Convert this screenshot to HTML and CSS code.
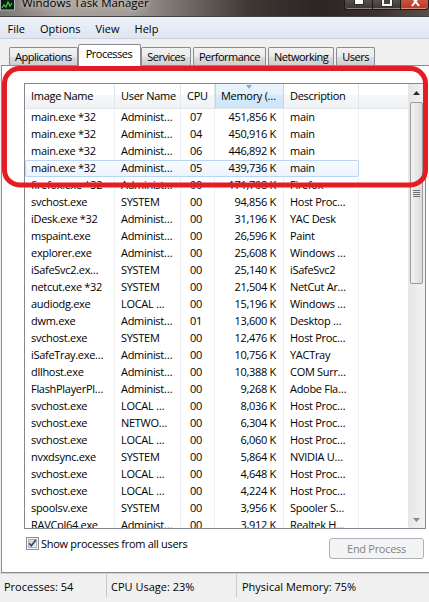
FILE: index.html
```html
<!DOCTYPE html>
<html>
<head>
<meta charset="utf-8">
<title>Windows Task Manager</title>
<link rel="stylesheet" href="styles.css">
</head>
<body>
<div class="window">
  <div class="titlebar">
    <svg class="app-icon" width="15" height="11" viewBox="0 0 15 11">
      <rect x="0.5" y="-2" width="14" height="12" fill="#0d1d10" stroke="#aeb6bc"/>
      <polyline points="2,8 4,5 6,7 8,2 10,6 12,3" fill="none" stroke="#3fd13f" stroke-width="1.2"/>
    </svg>
    <span class="title">Windows Task Manager</span>
    <div class="caption-buttons">
      <span class="cap-btn min"><i></i></span>
      <span class="cap-btn max"><i></i></span>
      <span class="cap-btn close">
        <svg width="12" height="8" viewBox="0 0 12 8"><path d="M3 -3 L10 6 M10 -3 L3 6" stroke="#fff" stroke-width="2"/></svg>
      </span>
    </div>
  </div>

  <div class="menubar">
    <span>File</span><span>Options</span><span>View</span><span>Help</span>
  </div>

  <div class="tabstrip">
    <span class="tab">Applications</span>
    <span class="tab active">Processes</span>
    <span class="tab">Services</span>
    <span class="tab">Performance</span>
    <span class="tab">Networking</span>
    <span class="tab">Users</span>
  </div>

  <div class="panel">
    <div class="listview">
      <div class="table">
        <div class="header">
          <div class="hcell">Image Name</div>
          <div class="hcell">User Name</div>
          <div class="hcell">CPU</div>
          <div class="hcell sorted">Memory (…</div>
          <div class="hcell">Description</div>
          <div class="hcell filler"></div>
        </div>
        <div class="rows">
          <div class="row"><span>main.exe *32</span><span>Administ…</span><span class="num">07</span><span class="mem">451,856 K</span><span>main</span></div>
          <div class="row"><span>main.exe *32</span><span>Administ…</span><span class="num">04</span><span class="mem">450,916 K</span><span>main</span></div>
          <div class="row"><span>main.exe *32</span><span>Administ…</span><span class="num">06</span><span class="mem">446,892 K</span><span>main</span></div>
          <div class="row hot"><span>main.exe *32</span><span>Administ…</span><span class="num">05</span><span class="mem">439,736 K</span><span>main</span></div>
          <div class="row"><span>firefox.exe *32</span><span>Administ…</span><span class="num">00</span><span class="mem">171,708 K</span><span>Firefox</span></div>
          <div class="row"><span>svchost.exe</span><span>SYSTEM</span><span class="num">00</span><span class="mem">94,856 K</span><span>Host Proc…</span></div>
          <div class="row"><span>iDesk.exe *32</span><span>Administ…</span><span class="num">00</span><span class="mem">31,196 K</span><span>YAC Desk</span></div>
          <div class="row"><span>mspaint.exe</span><span>Administ…</span><span class="num">00</span><span class="mem">26,596 K</span><span>Paint</span></div>
          <div class="row"><span>explorer.exe</span><span>Administ…</span><span class="num">00</span><span class="mem">25,608 K</span><span>Windows …</span></div>
          <div class="row"><span>iSafeSvc2.ex…</span><span>SYSTEM</span><span class="num">00</span><span class="mem">25,140 K</span><span>iSafeSvc2</span></div>
          <div class="row"><span>netcut.exe *32</span><span>SYSTEM</span><span class="num">00</span><span class="mem">21,504 K</span><span>NetCut Ar…</span></div>
          <div class="row"><span>audiodg.exe</span><span>LOCAL …</span><span class="num">00</span><span class="mem">15,196 K</span><span>Windows …</span></div>
          <div class="row"><span>dwm.exe</span><span>Administ…</span><span class="num">01</span><span class="mem">13,600 K</span><span>Desktop …</span></div>
          <div class="row"><span>svchost.exe</span><span>SYSTEM</span><span class="num">00</span><span class="mem">12,476 K</span><span>Host Proc…</span></div>
          <div class="row"><span>iSafeTray.exe…</span><span>Administ…</span><span class="num">00</span><span class="mem">10,756 K</span><span>YACTray</span></div>
          <div class="row"><span>dllhost.exe</span><span>Administ…</span><span class="num">00</span><span class="mem">10,388 K</span><span>COM Surr…</span></div>
          <div class="row"><span>FlashPlayerPl…</span><span>Administ…</span><span class="num">00</span><span class="mem">9,268 K</span><span>Adobe Fla…</span></div>
          <div class="row"><span>svchost.exe</span><span>LOCAL …</span><span class="num">00</span><span class="mem">8,036 K</span><span>Host Proc…</span></div>
          <div class="row"><span>svchost.exe</span><span>NETWO…</span><span class="num">00</span><span class="mem">6,304 K</span><span>Host Proc…</span></div>
          <div class="row"><span>svchost.exe</span><span>LOCAL …</span><span class="num">00</span><span class="mem">6,060 K</span><span>Host Proc…</span></div>
          <div class="row"><span>nvxdsync.exe</span><span>SYSTEM</span><span class="num">00</span><span class="mem">5,864 K</span><span>NVIDIA U…</span></div>
          <div class="row"><span>svchost.exe</span><span>LOCAL …</span><span class="num">00</span><span class="mem">4,648 K</span><span>Host Proc…</span></div>
          <div class="row"><span>svchost.exe</span><span>LOCAL …</span><span class="num">00</span><span class="mem">4,224 K</span><span>Host Proc…</span></div>
          <div class="row"><span>spoolsv.exe</span><span>SYSTEM</span><span class="num">00</span><span class="mem">3,956 K</span><span>Spooler S…</span></div>
          <div class="row"><span>RAVCpl64.exe</span><span>Administ…</span><span class="num">00</span><span class="mem">3,912 K</span><span>Realtek H…</span></div>
        </div>
      </div>
      <div class="vscroll">
        <div class="sb-btn">
          <svg width="7" height="4" viewBox="0 0 7 4"><path d="M0 4 L3.5 0 L7 4 Z" fill="#2a2a2a"/></svg>
        </div>
        <div class="sb-track">
          <div class="sb-thumb">
            <svg width="7" height="7" viewBox="0 0 7 7"><path d="M0 0.5 H7 M0 2.5 H7 M0 4.5 H7 M0 6.5 H7" stroke="#6e6e6e" stroke-width="1"/></svg>
          </div>
        </div>
        <div class="sb-btn">
          <svg width="7" height="4" viewBox="0 0 7 4"><path d="M0 0 L3.5 4 L7 0 Z" fill="#8a8a8a"/></svg>
        </div>
      </div>
    </div>
    <div class="options">
      <label class="check">
        <svg width="13" height="13" viewBox="0 0 13 13">
          <defs><linearGradient id="cb" x1="0" y1="0" x2="1" y2="1"><stop offset="0" stop-color="#cbcfd5"/><stop offset="1" stop-color="#f6f6f6"/></linearGradient></defs>
          <rect x="0.5" y="0.5" width="12" height="12" fill="#f4f4f4" stroke="#8e8f8f"/>
          <rect x="2.5" y="2.5" width="8" height="8" fill="url(#cb)" stroke="#aeb3b9"/>
          <path d="M3.2 6.3 L5.3 8.8 L9.8 3" fill="none" stroke="#33477b" stroke-width="1.7"/>
        </svg>
        <span>Show processes from all users</span>
      </label>
      <button class="end-btn" disabled>End Process</button>
    </div>
  </div>

  <div class="statusbar">
    <div>Processes: 54</div>
    <div>CPU Usage: 23%</div>
    <div>Physical Memory: 75%</div>
  </div>
</div>

<svg class="annotation" width="429" height="602" viewBox="0 0 429 602">
  <rect x="4.5" y="68.5" width="421" height="116.5" rx="15" fill="none" stroke="#e41c24" stroke-width="5"/>
</svg>
</body>
</html>
```

FILE: styles.css
```css
* { box-sizing: border-box; margin: 0; padding: 0; }

html, body { width: 429px; height: 602px; }

body {
  position: relative;
  overflow: hidden;
  background: #f0f0f0;
  font-family: "Open Sans", "Noto Sans", sans-serif;
  font-size: 11px;
  letter-spacing: -0.3px;
  color: #000;
}

.window {
  display: flex;
  flex-direction: column;
  width: 429px;
  height: 602px;
}

/* ---------- title bar ---------- */
.titlebar {
  flex: 0 0 17px;
  display: flex;
  align-items: flex-start;
  overflow: hidden;
  border-bottom: 1px solid #40403f;
  background: linear-gradient(90deg, #7d7773 0%, #a6a09b 14%, #a29c97 30%, #6f6864 44%, #3f3835 58%, #2b2523 74%, #3a322f 88%, #5a504b 100%);
}

.app-icon { flex: 0 0 15px; margin-right: 7px; }

.title {
  font-size: 11.5px;
  letter-spacing: 0;
  line-height: 16px;
  margin-top: -5px;
  color: #000;
  text-shadow: 0 0 5px #ddd8d3, 0 0 9px #cfc9c4;
  white-space: nowrap;
}

.caption-buttons {
  margin-left: auto;
  display: flex;
  height: 10px;
}

.cap-btn {
  height: 10px;
  display: flex;
  justify-content: center;
  align-items: flex-start;
  border: 1px solid #1c1a19;
  border-top: none;
  overflow: hidden;
}

.cap-btn.min {
  width: 29px;
  border-radius: 0 0 0 4px;
  background: linear-gradient(#57514e, #3a3432);
  box-shadow: inset 0 -1px 0 #8c8480;
}
.cap-btn.min i {
  display: block;
  width: 10px;
  height: 5px;
  background: #fafafa;
  border: 1px solid #2e2e2e;
  border-top: none;
}

.cap-btn.max {
  width: 28px;
  border-left: none;
  background: linear-gradient(#57514e, #3a3432);
  box-shadow: inset 0 -1px 0 #8c8480;
}
.cap-btn.max i {
  display: block;
  width: 10px;
  height: 6px;
  border: 2px solid #fafafa;
  border-top: none;
  background: #4a4542;
  box-shadow: 0 0 0 1px #2e2e2e;
}

.cap-btn.close {
  width: 28px;
  border-left: none;
  border-radius: 0 0 4px 0;
  background: linear-gradient(#c9533f, #b4382a);
  box-shadow: inset 0 -1px 0 #e08a7a;
}

/* ---------- menu bar ---------- */
.menubar {
  flex: 0 0 21px;
  display: flex;
  padding: 3px 0 0 0;
  line-height: 18px;
  letter-spacing: 0;
  background: linear-gradient(#edf1f8, #dfe6f2);
  border-bottom: 1px solid #cbd3e0;
}
.menubar span { padding: 0 7.5px; }

/* ---------- tabs ---------- */
.tabstrip {
  flex: 0 0 26px;
  display: flex;
  align-items: flex-end;
  padding-left: 9px;
  background: #f0f0f0;
}

.tab {
  height: 18px;
  padding: 1px 5px 0;
  line-height: 16px;
  letter-spacing: -0.5px;
  white-space: nowrap;
  border: 1px solid #898c95;
  border-bottom: none;
  border-radius: 2px 2px 0 0;
  margin-right: 2px;
  background: linear-gradient(#f2f2f2 0%, #ebebeb 50%, #dddddd 51%, #cfcfcf 100%);
}

.tab.active {
  position: relative;
  z-index: 1;
  height: 22px;
  padding: 1px 8px 0 7px;
  margin: 0 0 -1px -2px;
  background: #fff;
}

/* ---------- panel ---------- */
.panel {
  flex: 0 0 508px;
  width: 440px;
  margin-left: 1px;
  padding: 17px 0 0 22px;
  border: 1px solid #898c95;
  background: #fff;
}

.listview {
  display: flex;
  width: 402px;
  height: 446px;
  border: 1px solid #828790;
  background: #fff;
}

.table {
  flex: 1;
  display: flex;
  flex-direction: column;
  overflow: hidden;
}

.header {
  flex: 0 0 25px;
  display: grid;
  grid-template-columns: 90px 66px 34px 69px 75px 1fr;
  border-bottom: 1px solid #e3e6ea;
  background: linear-gradient(#ffffff 0%, #ffffff 45%, #f6f7f8 46%, #f1f2f4 100%);
}

.hcell {
  position: relative;
  padding-left: 6px;
  line-height: 24px;
  white-space: nowrap;
  overflow: hidden;
  border-right: 1px solid #e3e6ea;
}

.hcell.sorted {
  background: linear-gradient(#e9f4fd 0%, #e3f0fc 45%, #d5eafb 46%, #cee6f9 100%);
  box-shadow: inset 1px 0 #b9d9f3;
  border-right-color: #b9d9f3;
}
.hcell.sorted::before {
  content: "";
  position: absolute;
  left: 31px;
  top: 1px;
  border-left: 3.5px solid transparent;
  border-right: 3.5px solid transparent;
  border-top: 4px solid #93a9c6;
}

.hcell.filler { border-right: none; }

.rows { flex: 1; overflow: hidden; }

.row {
  display: grid;
  grid-template-columns: 90px 66px 34px 69px 75px;
  width: 334px;
  height: 17px;
  line-height: 15px;
}

.row span {
  padding-left: 6px;
  white-space: nowrap;
  overflow: hidden;
  border-right: 1px solid #efefef;
}

.row .num { text-align: right; padding: 0 12px 0 0; }
.row .mem { text-align: right; padding: 0 7px 0 0; }

.row.hot {
  border-radius: 2px;
  background: linear-gradient(#fafcfe, #ebf3fd);
  box-shadow: inset 0 0 0 1px #b8d5f7;
}
.row.hot span { border-right-color: transparent; }

/* ---------- scrollbar ---------- */
.vscroll {
  flex: 0 0 17px;
  display: flex;
  flex-direction: column;
  background: linear-gradient(90deg, #e6e6e6, #f2f2f2);
}

.sb-btn {
  flex: 0 0 17px;
  display: flex;
  align-items: center;
  justify-content: center;
}

.sb-track { flex: 1; padding-top: 1px; }

.sb-thumb {
  height: 182px;
  margin: 0 2px;
  display: flex;
  align-items: center;
  justify-content: center;
  border: 1px solid #9b9b9b;
  border-radius: 2px;
  background: linear-gradient(90deg, #f4f4f4, #e8e8e8 50%, #d9d9d9);
}

/* ---------- options row ---------- */
.options {
  display: flex;
  justify-content: space-between;
  align-items: flex-start;
  width: 400px;
  margin-top: 8px;
  padding-left: 2px;
}

.check {
  display: flex;
  align-items: center;
  gap: 2px;
  height: 13px;
  line-height: 13px;
  white-space: nowrap;
}

.end-btn {
  width: 95px;
  height: 21px;
  margin-top: 1px;
  border: 1px solid #adb2b5;
  border-radius: 3px;
  background: #f4f4f4;
  color: #838383;
  font: inherit;
  letter-spacing: inherit;
}

/* ---------- status bar ---------- */
.statusbar {
  flex: 0 0 24px;
  display: grid;
  grid-template-columns: 106px 130px 1fr;
  border-top: 1px solid #d0d0d0;
  background: #f0f0f0;
  letter-spacing: 0;
}

.statusbar div {
  padding: 2px 0 0 4px;
  line-height: 21px;
  white-space: nowrap;
}

.statusbar div + div {
  border-left: 1px solid #c9c9c9;
  padding-left: 4px;
}
.statusbar div:last-child { padding-left: 5px; }

/* ---------- red annotation drawn over the screenshot ---------- */
.annotation {
  position: absolute;
  left: 0;
  top: 0;
  pointer-events: none;
}
```
